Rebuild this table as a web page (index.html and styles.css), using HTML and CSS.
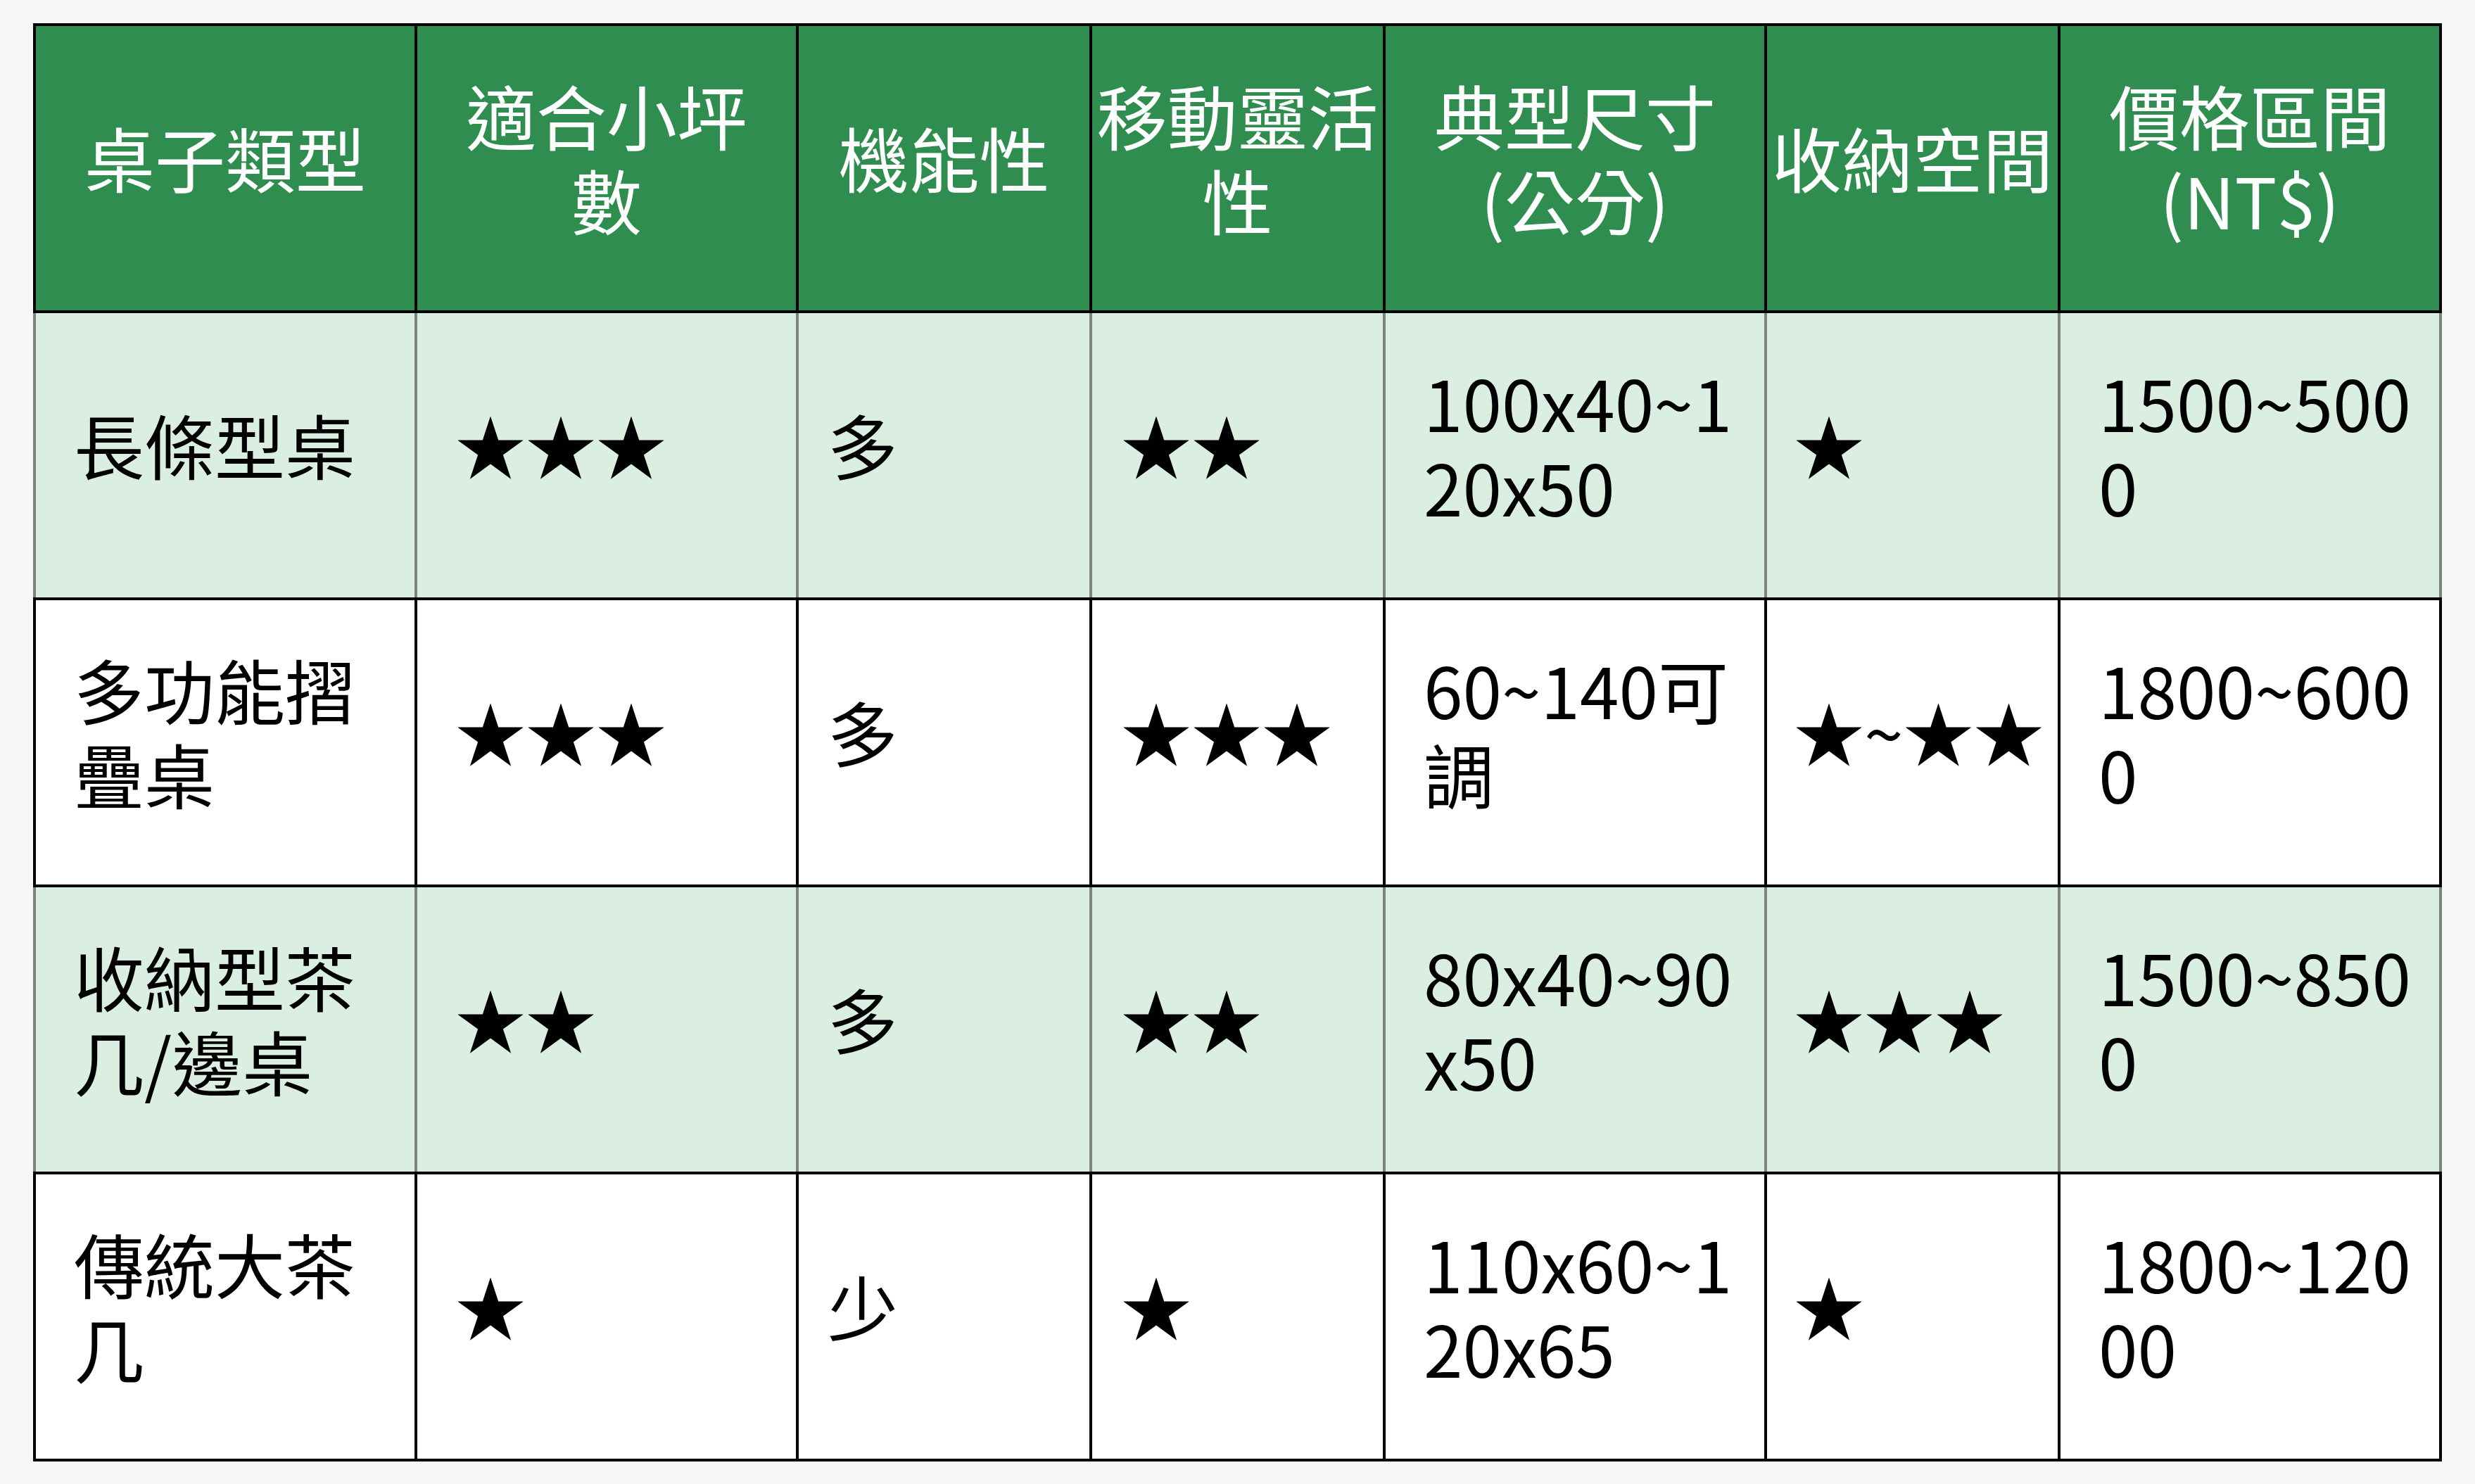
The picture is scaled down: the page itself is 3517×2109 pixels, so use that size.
FILE: index.html
```html
<!DOCTYPE html>
<html lang="zh-Hant">
<head>
<meta charset="utf-8">
<title>桌子類型比較</title>
<link rel="stylesheet" href="styles.css">
</head>
<body>
<table class="compare">
  <colgroup>
    <col class="c-wide"><col class="c-wide"><col class="c-narrow"><col class="c-narrow"><col class="c-wide"><col class="c-narrow"><col class="c-wide">
  </colgroup>
  <thead>
    <tr>
      <th>桌子類型</th>
      <th>適合小坪<br>數</th>
      <th>機能性</th>
      <th>移動靈活<br>性</th>
      <th>典型尺寸<br>(公分)</th>
      <th>收納空間</th>
      <th>價格區間<br>(NT$)</th>
    </tr>
  </thead>
  <tbody>
    <tr class="tint">
      <td>長條型桌</td><td>★★★</td><td>多</td><td>★★</td><td>100x40~120x50</td><td>★</td><td>1500~5000</td>
    </tr>
    <tr>
      <td>多功能摺疊桌</td><td>★★★</td><td>多</td><td>★★★</td><td>60~140可調</td><td>★~★★</td><td>1800~6000</td>
    </tr>
    <tr class="tint">
      <td>收納型茶几/邊桌</td><td>★★</td><td>多</td><td>★★</td><td>80x40~90x50</td><td>★★★</td><td>1500~8500</td>
    </tr>
    <tr>
      <td>傳統大茶几</td><td>★</td><td>少</td><td>★</td><td>110x60~120x65</td><td>★</td><td>1800~12000</td>
    </tr>
  </tbody>
</table>
</body>
</html>
```
FILE: styles.css
```css
html, body {
  margin: 0;
  background: #f4f7f6;
}
body {
  padding: 33px 47px;
  font-family: "Noto Sans CJK TC", "Noto Sans", sans-serif;
  font-size: 100px;
  line-height: 120px;
  color: #000;
}
.compare {
  border-collapse: collapse;
  table-layout: fixed;
  width: 3422px;
  border: 4px solid #000;
}
.c-wide { width: 542px; }
.c-narrow { width: 417px; }

.compare th,
.compare td {
  border: 4px solid #000;
  vertical-align: middle;
}
.compare th {
  background: #2f8e4f;
  color: #fff;
  font-weight: 400;
  text-align: center;
  white-space: nowrap;
  padding: 66px 4px 98px;
}
.compare td {
  background: #fff;
  text-align: left;
  word-break: break-all;
  padding: 66px 28px 98px 54px;
}
.compare td:nth-child(3),
.compare td:nth-child(4) {
  padding-left: 41px;
  padding-right: 10px;
}
.compare td:nth-child(6) {
  padding-left: 38px;
  padding-right: 4px;
  white-space: nowrap;
}
.compare tr.tint td {
  background: #dbeee2;
  border-left-color: #7b847f;
  border-right-color: #7b847f;
}
```
